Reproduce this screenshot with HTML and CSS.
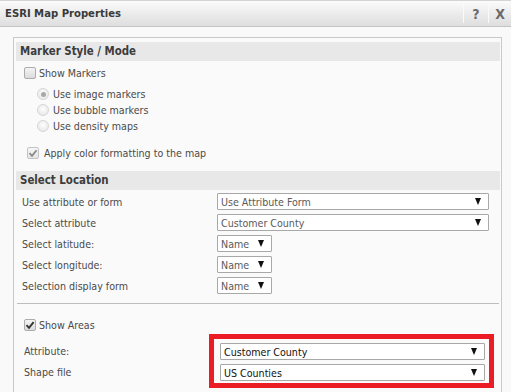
FILE: index.html
```html
<!DOCTYPE html>
<html>
<head>
<meta charset="utf-8">
<link rel="stylesheet" href="styles.css">
</head>
<body>
<div class="dialog">
  <div class="titlebar">
    <div class="title">ESRI Map Properties</div>
    <div class="tools">
      <span class="sep"></span>
      <span class="tool">?</span>
      <span class="sep"></span>
      <span class="tool x">X</span>
    </div>
  </div>
  <div class="content">
    <div class="panel">
      <div class="header">Marker Style / Mode</div>
      <div class="row-check first">
        <span class="cb"></span><span class="lbl">Show Markers</span>
      </div>
      <div class="radios">
        <div class="radio-row"><span class="rb on"></span><span class="lbl">Use image markers</span></div>
        <div class="radio-row"><span class="rb"></span><span class="lbl">Use bubble markers</span></div>
        <div class="radio-row"><span class="rb"></span><span class="lbl">Use density maps</span></div>
      </div>
      <div class="row-check apply">
        <span class="cb checked dim"><svg viewBox="0 0 10 10" width="10" height="10"><path d="M1.5 5.2 L4 7.8 L8.6 2.2" fill="none" stroke="#8a8a8a" stroke-width="1.8"/></svg></span><span class="lbl">Apply color formatting to the map</span>
      </div>
      <div class="header second">Select Location</div>
      <div class="grid">
        <div class="glabel">Use attribute or form</div>
        <div class="sel wide"><span>Use Attribute Form</span><i class="arr"></i></div>
        <div class="glabel">Select attribute</div>
        <div class="sel wide"><span>Customer County</span><i class="arr"></i></div>
        <div class="glabel">Select latitude:</div>
        <div class="sel small"><span>Name</span><i class="arr"></i></div>
        <div class="glabel">Select longitude:</div>
        <div class="sel small"><span>Name</span><i class="arr"></i></div>
        <div class="glabel">Selection display form</div>
        <div class="sel small"><span>Name</span><i class="arr"></i></div>
      </div>
      <div class="divider"></div>
      <div class="row-check areas">
        <span class="cb checked"><svg viewBox="0 0 10 10" width="10" height="10"><path d="M1.5 5.2 L4 7.8 L8.6 2.2" fill="none" stroke="#333" stroke-width="1.9"/></svg></span><span class="lbl">Show Areas</span>
      </div>
      <div class="area-block">
        <div class="area-labels">
          <div class="alabel">Attribute:</div>
          <div class="alabel">Shape file</div>
        </div>
        <div class="redbox">
          <div class="sel dark"><span>Customer County</span><i class="arr"></i></div>
          <div class="sel dark"><span>US Counties</span><i class="arr"></i></div>
        </div>
      </div>
    </div>
  </div>
</div>
</body>
</html>
```

FILE: styles.css
```css
* { box-sizing: border-box; }
html, body {
  margin: 0;
  padding: 0;
  height: 392px;
  overflow: hidden;
  background: #f9f9f9;
}
body {
  font-family: "DejaVu Sans Condensed", "DejaVu Sans", sans-serif;
  font-size: 10.6px;
  color: #4a4a4a;
}
.dialog {
  width: 511px;
  height: 392px;
  background: #f9f9f9;
}
.titlebar {
  height: 27px;
  border-top: 1px solid #d4d4d4;
  border-bottom: 1px solid #c4c4c4;
  background: linear-gradient(#fbfbfb, #e9e9e9 60%, #dedede);
  display: flex;
  align-items: center;
  justify-content: space-between;
}
.title {
  padding-left: 5px;
  font-weight: bold;
  font-size: 11.2px;
  color: #3a3a3a;
}
.tools {
  display: flex;
  align-items: center;
  height: 100%;
}
.sep {
  width: 1px;
  height: 18px;
  background: #c8c8c8;
  border-right: 1px solid #fafafa;
}
.tool {
  font-weight: bold;
  font-size: 14px;
  color: #6a6a6a;
  width: 24px;
  text-align: center;
}
.tool.x { width: 22px; font-size: 14px; }
.content {
  padding: 10px 0 0 13px;
}
.panel {
  width: 489px;
  height: 360px;
  border: 1px solid #c9c9c9;
  border-bottom: none;
  padding: 4px 1px 0 2px;
  background: #fafafa;
}
.header {
  height: 19px;
  line-height: 19px;
  background: #e8e8e8;
  padding-left: 4px;
  font-weight: bold;
  font-size: 11.4px;
  color: #3c3c3c;
}
.header.second { margin-top: 10px; }
.row-check {
  display: flex;
  align-items: center;
}
.row-check.first { height: 24px; padding-left: 8px; }
.row-check.apply { height: 16px; margin-top: 11px; padding-left: 11px; }
.row-check.areas { height: 16px; margin-top: 13px; padding-left: 8px; }
.cb {
  width: 12px;
  height: 12px;
  border: 1px solid #acacac;
  border-radius: 2px;
  background: linear-gradient(#f4f4f4, #dcdcdc);
  margin-right: 3px;
  display: flex;
  align-items: center;
  justify-content: center;
  flex: none;
}
.cb.dim { border-color: #c4c4c4; background: linear-gradient(#f6f6f6, #e6e6e6); }
.cb svg { display: block; }
.row-check.apply .cb { margin-right: 5px; }
.radios { padding-top: 1px; padding-left: 21px; }
.radio-row {
  height: 16px;
  display: flex;
  align-items: center;
}
.rb {
  width: 12px;
  height: 12px;
  border-radius: 50%;
  border: 1px solid #d6d6d6;
  background: radial-gradient(circle at 50% 40%, #fdfdfd, #e4e4e4);
  margin-right: 4px;
  flex: none;
  display: flex;
  align-items: center;
  justify-content: center;
}
.rb.on::after {
  content: "";
  width: 5px;
  height: 5px;
  border-radius: 50%;
  background: #a8a8a8;
}
.lbl { color: #4a4a4a; }
.grid {
  display: grid;
  grid-template-columns: 201px 272px;
  grid-auto-rows: 17px;
  row-gap: 4px;
  padding-top: 3px;
  align-items: center;
}
.glabel { padding-left: 6px; }
.sel {
  height: 17px;
  border: 1px solid #a8a8a8;
  border-radius: 1px;
  background: #fff;
  display: flex;
  align-items: center;
  justify-content: space-between;
  padding: 0 7px 0 3px;
  color: #5a5a5a;
}
.sel.small { width: 55px; }
.arr {
  width: 0;
  height: 0;
  border-left: 3.5px solid transparent;
  border-right: 3.5px solid transparent;
  border-top: 7px solid #111;
}
.divider {
  height: 1px;
  background: #bdbdbd;
  margin: 9px 1px 0 1px;
}
.area-block {
  display: flex;
  margin-top: 1px;
}
.area-labels {
  width: 193px;
  padding-top: 9px;
  padding-left: 8px;
  display: flex;
  flex-direction: column;
  gap: 4px;
}
.alabel { height: 17px; line-height: 17px; }
.redbox {
  width: 285px;
  border: 5px solid #ec1c24;
  padding: 4px 4px 2px 6px;
  display: flex;
  flex-direction: column;
  gap: 4px;
  background: #fafafa;
}
.sel.dark { color: #111; }
```
